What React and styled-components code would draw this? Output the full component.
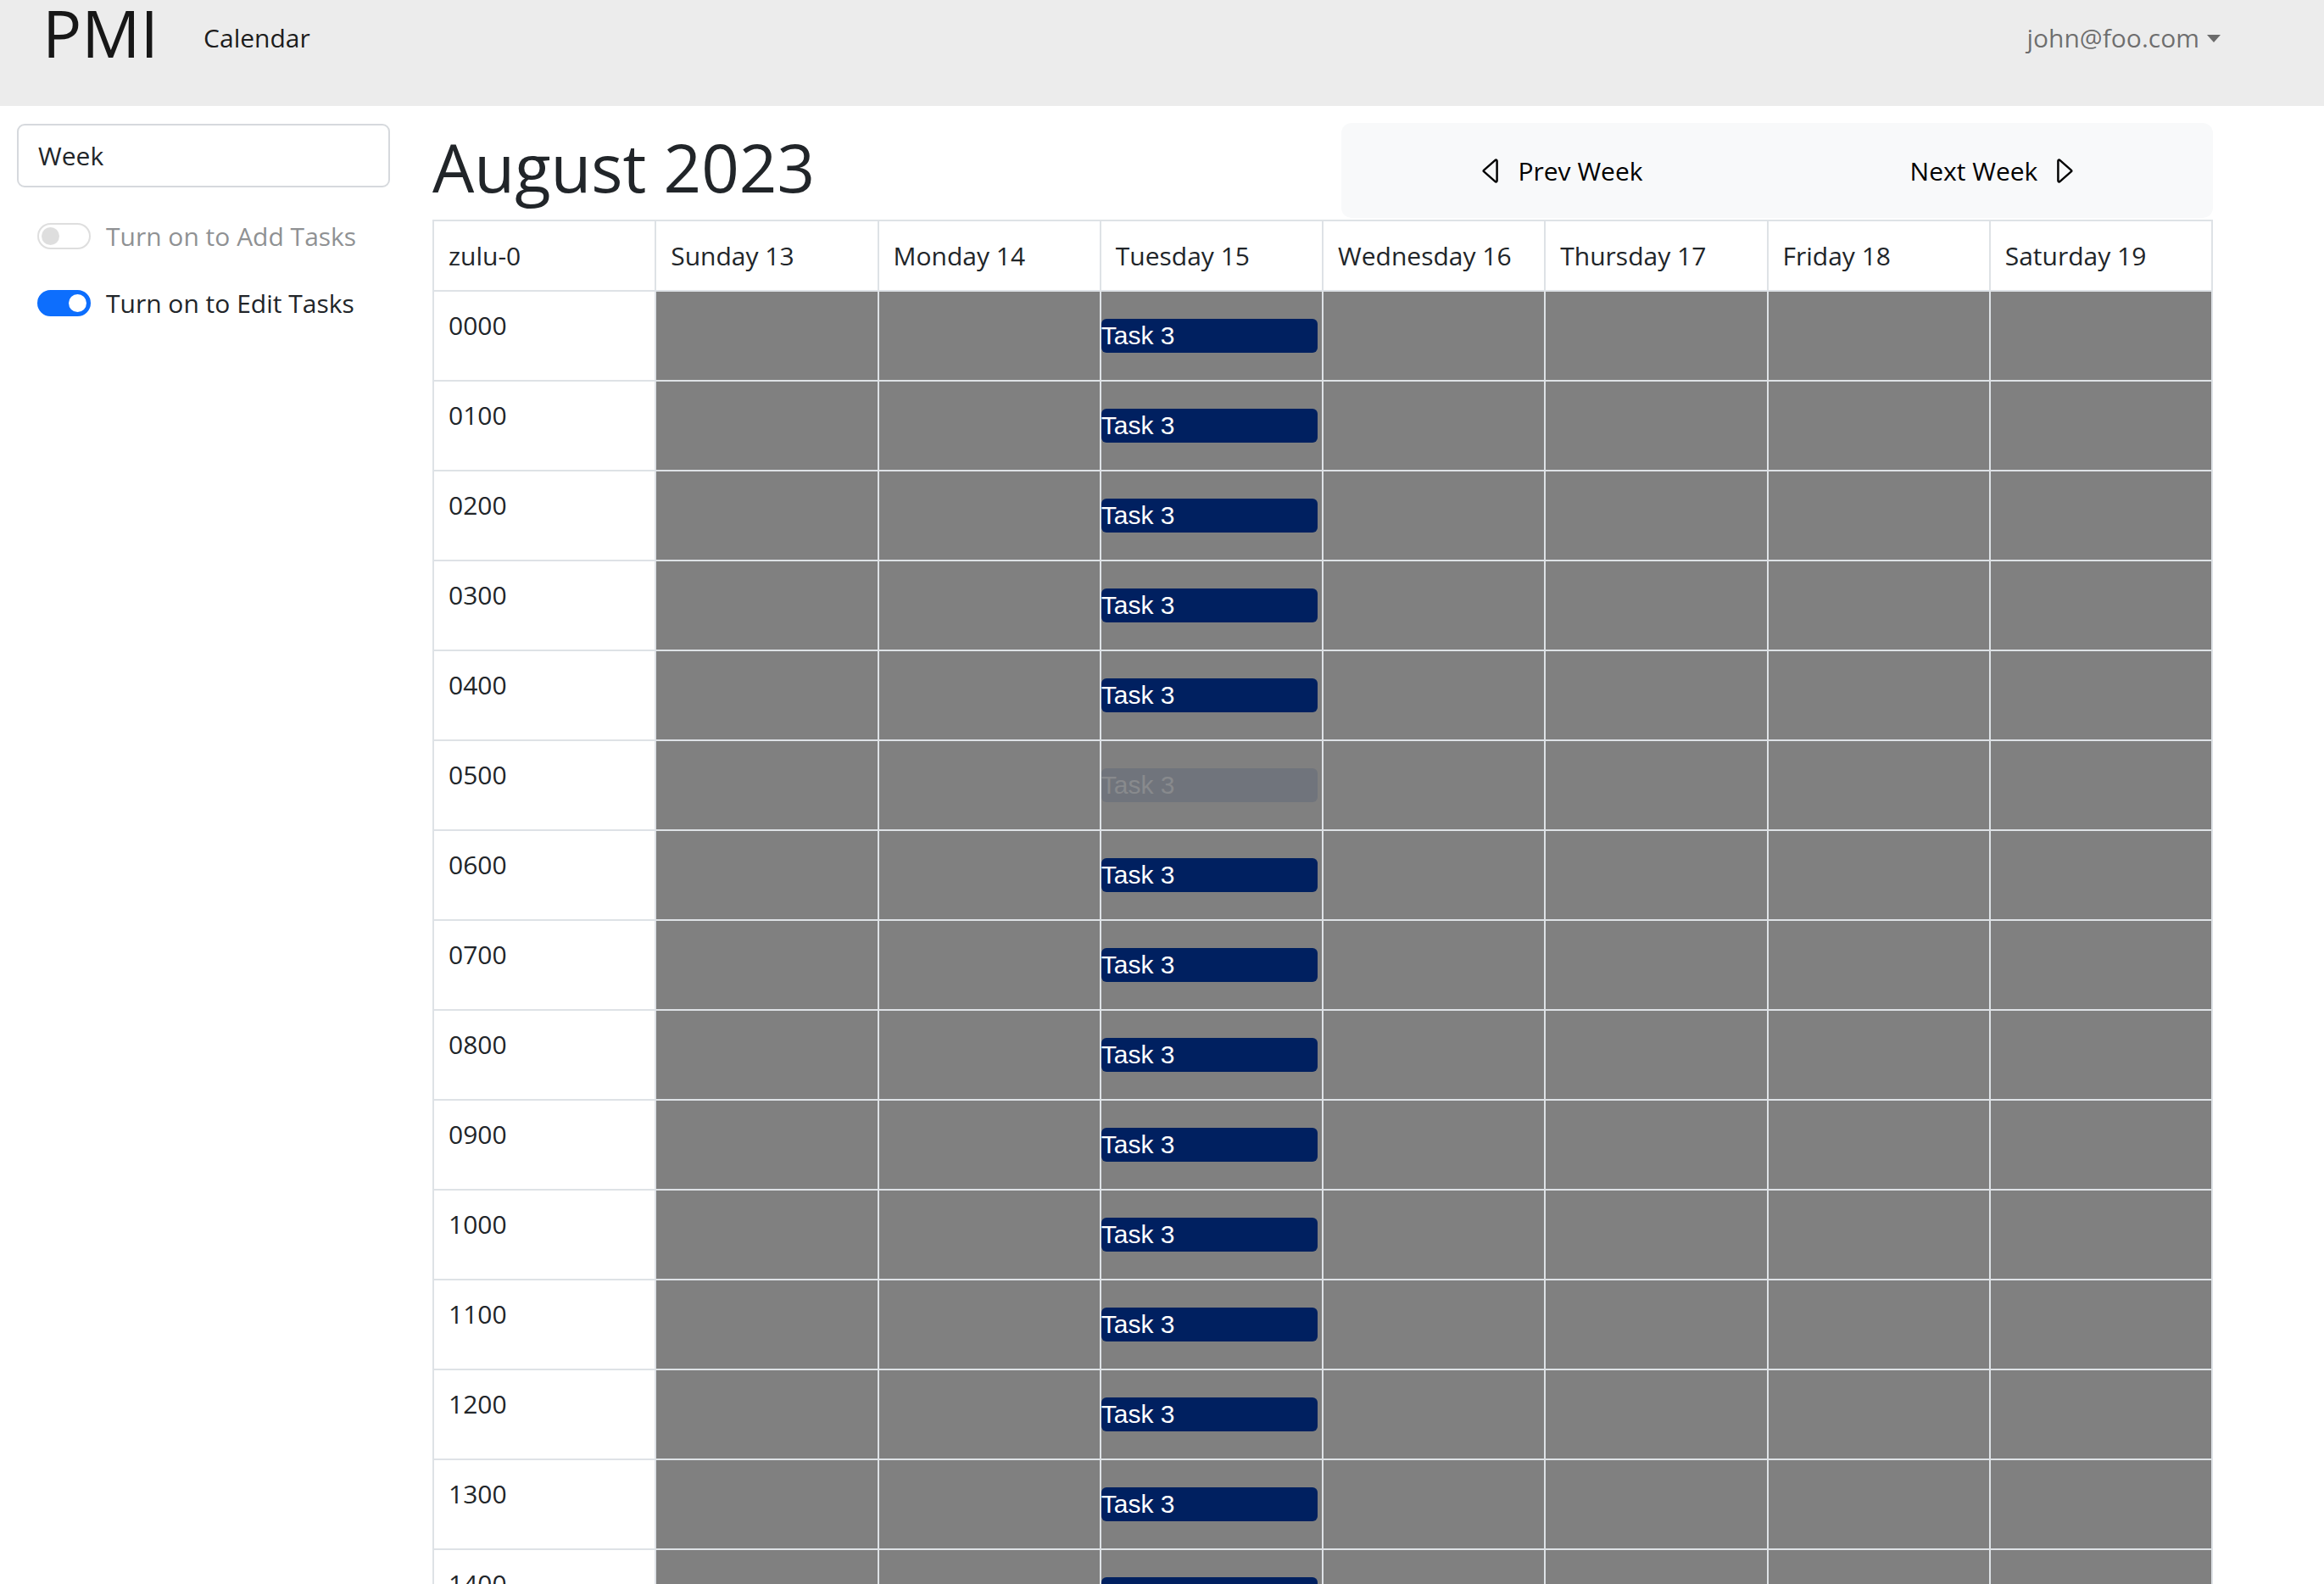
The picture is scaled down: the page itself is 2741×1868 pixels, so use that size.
import React from "react";
import styled, { createGlobalStyle } from "styled-components";
import { BsCaretLeft, BsCaretRight } from "react-icons/bs";

const days = [
  "Sunday 13",
  "Monday 14",
  "Tuesday 15",
  "Wednesday 16",
  "Thursday 17",
  "Friday 18",
  "Saturday 19",
];

const hours = Array.from({ length: 24 }, (_, i) =>
  String(i * 100).padStart(4, "0")
);

const App = () => {
  return (
    <>
      <GlobalStyle />
      <Navbar>
        <Brand>
          <Logo>PMI</Logo>
          <NavLink>Calendar</NavLink>
        </Brand>
        <UserMenu>john@foo.com</UserMenu>
      </Navbar>
      <Page>
        <Sidebar>
          <ViewSelect>Week</ViewSelect>
          <SwitchRow $disabled>
            <Switch $disabled />
            <span>Turn on to Add Tasks</span>
          </SwitchRow>
          <SwitchRow>
            <Switch $on />
            <span>Turn on to Edit Tasks</span>
          </SwitchRow>
        </Sidebar>
        <Main>
          <TopRow>
            <Title>August 2023</Title>
            <WeekNav>
              <NavButton>
                <BsCaretLeft size={39} />
                Prev Week
              </NavButton>
              <NavButton>
                Next Week
                <BsCaretRight size={39} />
              </NavButton>
            </WeekNav>
          </TopRow>
          <Grid>
            <HeadCell>zulu-0</HeadCell>
            {days.map((d) => (
              <HeadCell key={d}>{d}</HeadCell>
            ))}
            {hours.map((h) => (
              <React.Fragment key={h}>
                <TimeCell>{h}</TimeCell>
                {days.map((d, i) => (
                  <DayCell key={d}>
                    {i === 2 && <Task $faded={h === "0500"}>Task 3</Task>}
                  </DayCell>
                ))}
              </React.Fragment>
            ))}
          </Grid>
        </Main>
      </Page>
    </>
  );
};

//styled components
const GlobalStyle = createGlobalStyle`
  body {
    margin: 0;
    font-family: "Open Sans", "Noto Sans", sans-serif;
    font-size: 30px;
    line-height: 45px;
    color: #212529;
    background: #fff;
  }
`;

const Navbar = styled.nav`
  height: 125px;
  background: #ececec;
  display: flex;
  justify-content: space-between;
  align-items: flex-start;
  padding: 0 122px 0 50px;
  box-sizing: border-box;
`;
const Brand = styled.div`
  display: flex;
  align-items: flex-start;
  gap: 53px;
`;
const Logo = styled.div`
  font-size: 77px;
  line-height: 77px;
  color: rgba(0, 0, 0, 0.9);
`;
const NavLink = styled.div`
  padding-top: 22px;
  color: rgba(0, 0, 0, 0.9);
`;
const UserMenu = styled.div`
  padding-top: 22px;
  color: rgba(0, 0, 0, 0.55);
  display: flex;
  align-items: center;
  &::after {
    content: "";
    margin-left: 9px;
    margin-top: 2px;
    border-top: 9px solid rgba(0, 0, 0, 0.55);
    border-left: 8.5px solid transparent;
    border-right: 8.5px solid transparent;
  }
`;

const Page = styled.div`
  display: grid;
  grid-template-columns: 440px 2100px;
  column-gap: 50px;
  padding: 20px 0 0 20px;
`;

const Sidebar = styled.aside`
  display: flex;
  flex-direction: column;
`;
const ViewSelect = styled.div`
  height: 75px;
  box-sizing: border-box;
  border: 2px solid #d6d9dd;
  border-radius: 9px;
  padding: 0 23px;
  display: flex;
  align-items: center;
  margin: 1px 0 35px;
`;
const SwitchRow = styled.label`
  display: flex;
  align-items: center;
  gap: 18px;
  padding-left: 24px;
  margin-bottom: 34px;
  opacity: ${(p) => (p.$disabled ? 0.5 : 1)};
`;
const Switch = styled.span`
  position: relative;
  width: 63px;
  height: 31px;
  box-sizing: border-box;
  border-radius: 16px;
  border: 2px solid ${(p) => (p.$on ? "#0d6efd" : "rgba(0, 0, 0, 0.25)")};
  background: ${(p) => (p.$on ? "#0d6efd" : "#fff")};
  &::after {
    content: "";
    position: absolute;
    top: 3px;
    left: ${(p) => (p.$on ? "35px" : "3px")};
    width: 21px;
    height: 21px;
    border-radius: 50%;
    background: ${(p) => (p.$on ? "#fff" : "rgba(0, 0, 0, 0.25)")};
  }
`;

const Main = styled.main`
  display: flex;
  flex-direction: column;
  gap: 2px;
`;
const TopRow = styled.div`
  display: flex;
  justify-content: space-between;
  align-items: flex-start;
`;
const Title = styled.h1`
  margin: 0;
  padding-top: 5px;
  font-size: 78px;
  font-weight: 500;
  line-height: 94px;
`;
const WeekNav = styled.div`
  width: 1028px;
  height: 112px;
  background: #f8f9fa;
  border-radius: 12px;
  display: flex;
`;
const NavButton = styled.button`
  flex: 1;
  border: 0;
  background: none;
  font: inherit;
  color: #000;
  display: flex;
  align-items: center;
  justify-content: center;
  gap: 11px;
  padding: 0;
  cursor: pointer;
`;

const Grid = styled.div`
  display: grid;
  grid-template-columns: repeat(8, 1fr);
  border-top: 2px solid #dee2e6;
  border-left: 2px solid #dee2e6;
`;
const Cell = styled.div`
  box-sizing: border-box;
  border-right: 2px solid #dee2e6;
  border-bottom: 2px solid #dee2e6;
`;
const HeadCell = styled(Cell)`
  height: 83px;
  padding: 18px 17px;
`;
const TimeCell = styled(Cell)`
  height: 106px;
  padding: 17px 17px;
`;
const DayCell = styled(Cell)`
  height: 106px;
  background: #808080;
  display: flex;
  align-items: center;
  padding-right: 5px;
`;
const Task = styled.div`
  flex: 1;
  height: 40px;
  border-radius: 6px;
  background: ${(p) => (p.$faded ? "#70747c" : "#002060")};
  color: ${(p) => (p.$faded ? "#888a8d" : "#fff")};
  font-family: "Liberation Sans", Arial, sans-serif;
  font-size: 30px;
  line-height: 40px;
`;

export default App;
